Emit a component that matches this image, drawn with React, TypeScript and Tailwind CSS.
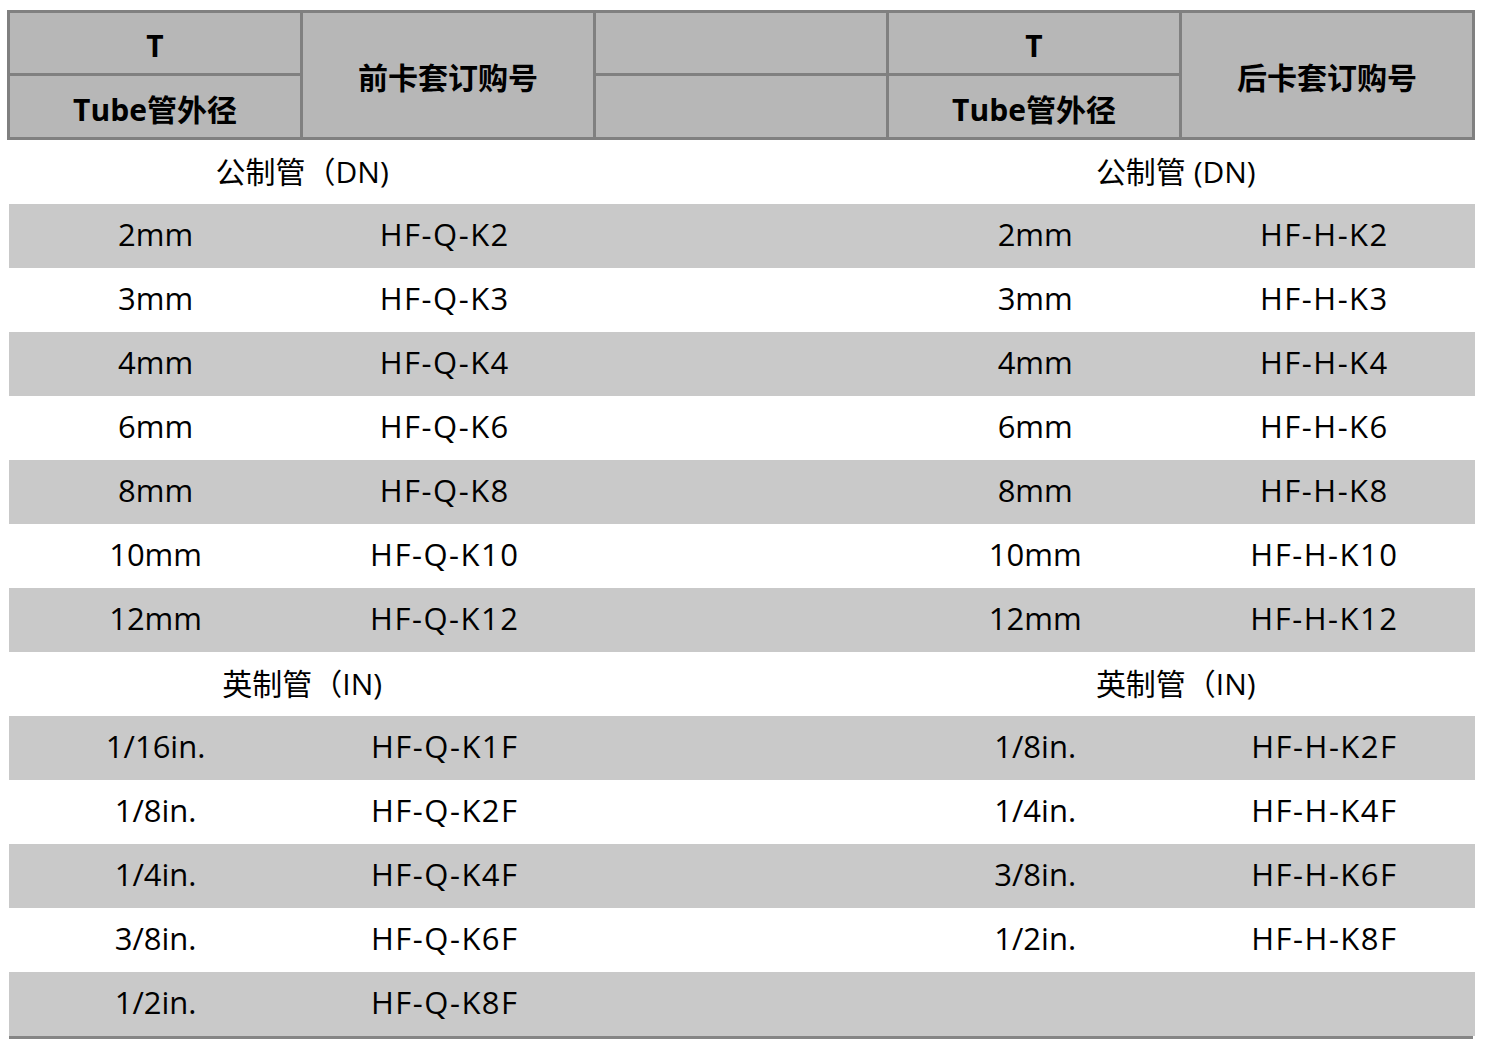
const font = { fontFamily: '"Open Sans", "Noto Sans CJK SC", sans-serif' }

type Row = { kind: "section"; left: string; right: string } | { kind: "data"; a: string; b: string; c?: string; d?: string }

const rows: Row[] = [
  { kind: "section", left: "公制管（DN)", right: "公制管 (DN)" },
  { kind: "data", a: "2mm", b: "HF-Q-K2", c: "2mm", d: "HF-H-K2" },
  { kind: "data", a: "3mm", b: "HF-Q-K3", c: "3mm", d: "HF-H-K3" },
  { kind: "data", a: "4mm", b: "HF-Q-K4", c: "4mm", d: "HF-H-K4" },
  { kind: "data", a: "6mm", b: "HF-Q-K6", c: "6mm", d: "HF-H-K6" },
  { kind: "data", a: "8mm", b: "HF-Q-K8", c: "8mm", d: "HF-H-K8" },
  { kind: "data", a: "10mm", b: "HF-Q-K10", c: "10mm", d: "HF-H-K10" },
  { kind: "data", a: "12mm", b: "HF-Q-K12", c: "12mm", d: "HF-H-K12" },
  { kind: "section", left: "英制管（IN)", right: "英制管（IN)" },
  { kind: "data", a: "1/16in.", b: "HF-Q-K1F", c: "1/8in.", d: "HF-H-K2F" },
  { kind: "data", a: "1/8in.", b: "HF-Q-K2F", c: "1/4in.", d: "HF-H-K4F" },
  { kind: "data", a: "1/4in.", b: "HF-Q-K4F", c: "3/8in.", d: "HF-H-K6F" },
  { kind: "data", a: "3/8in.", b: "HF-Q-K6F", c: "1/2in.", d: "HF-H-K8F" },
  { kind: "data", a: "1/2in.", b: "HF-Q-K8F" },
]

const HeadCell = ({ children, span }: { children?: React.ReactNode; span?: boolean }) => (
  <div className={`bg-[#b7b7b7] flex items-center justify-center pt-[5px] text-[30px] font-bold text-black ${span ? "row-span-2" : ""}`}>
    {children}
  </div>
)

export default function App() {
  let dataIdx = 0
  return (
    <div className="w-[1488px] h-[1047px] bg-white pt-[10px] text-black" style={font}>
      <div className="ml-[7px] w-[1468px] bg-[#808080] p-[3px] grid grid-cols-5 grid-rows-[60px_61px] gap-[3px]">
        <HeadCell>T</HeadCell>
        <HeadCell span>前卡套订购号</HeadCell>
        <HeadCell />
        <HeadCell>T</HeadCell>
        <HeadCell span>后卡套订购号</HeadCell>
        <HeadCell>Tube管外径</HeadCell>
        <HeadCell />
        <HeadCell>Tube管外径</HeadCell>
      </div>

      <div className="ml-[9px] w-[1466px]">
        {rows.map((r, i) => {
          if (r.kind === "section") {
            dataIdx = 0
            return (
              <div key={i} className="h-[64px] grid grid-cols-5 items-center text-[30px] bg-white pb-[2px]">
                <div className="col-span-2 text-center">{r.left}</div>
                <div />
                <div className="col-span-2 text-center pr-[12px]">{r.right}</div>
              </div>
            )
          }
          const gray = dataIdx++ % 2 === 0
          return (
            <div
              key={i}
              className={`h-[64px] grid grid-cols-5 items-center text-[31px] pb-[3px] ${gray ? "bg-[#c9c9c9]" : "bg-white"}`}
            >
              <div className="text-center">{r.a}</div>
              <div className="text-center tracking-[1.5px] pr-[8px]">{r.b}</div>
              <div />
              <div className="text-center">{r.c}</div>
              <div className="text-center tracking-[1.5px] pr-[8px]">{r.d}</div>
            </div>
          )
        })}
        <div className="h-[3px] w-[1464px] bg-[#858585]" />
      </div>
    </div>
  )
}
